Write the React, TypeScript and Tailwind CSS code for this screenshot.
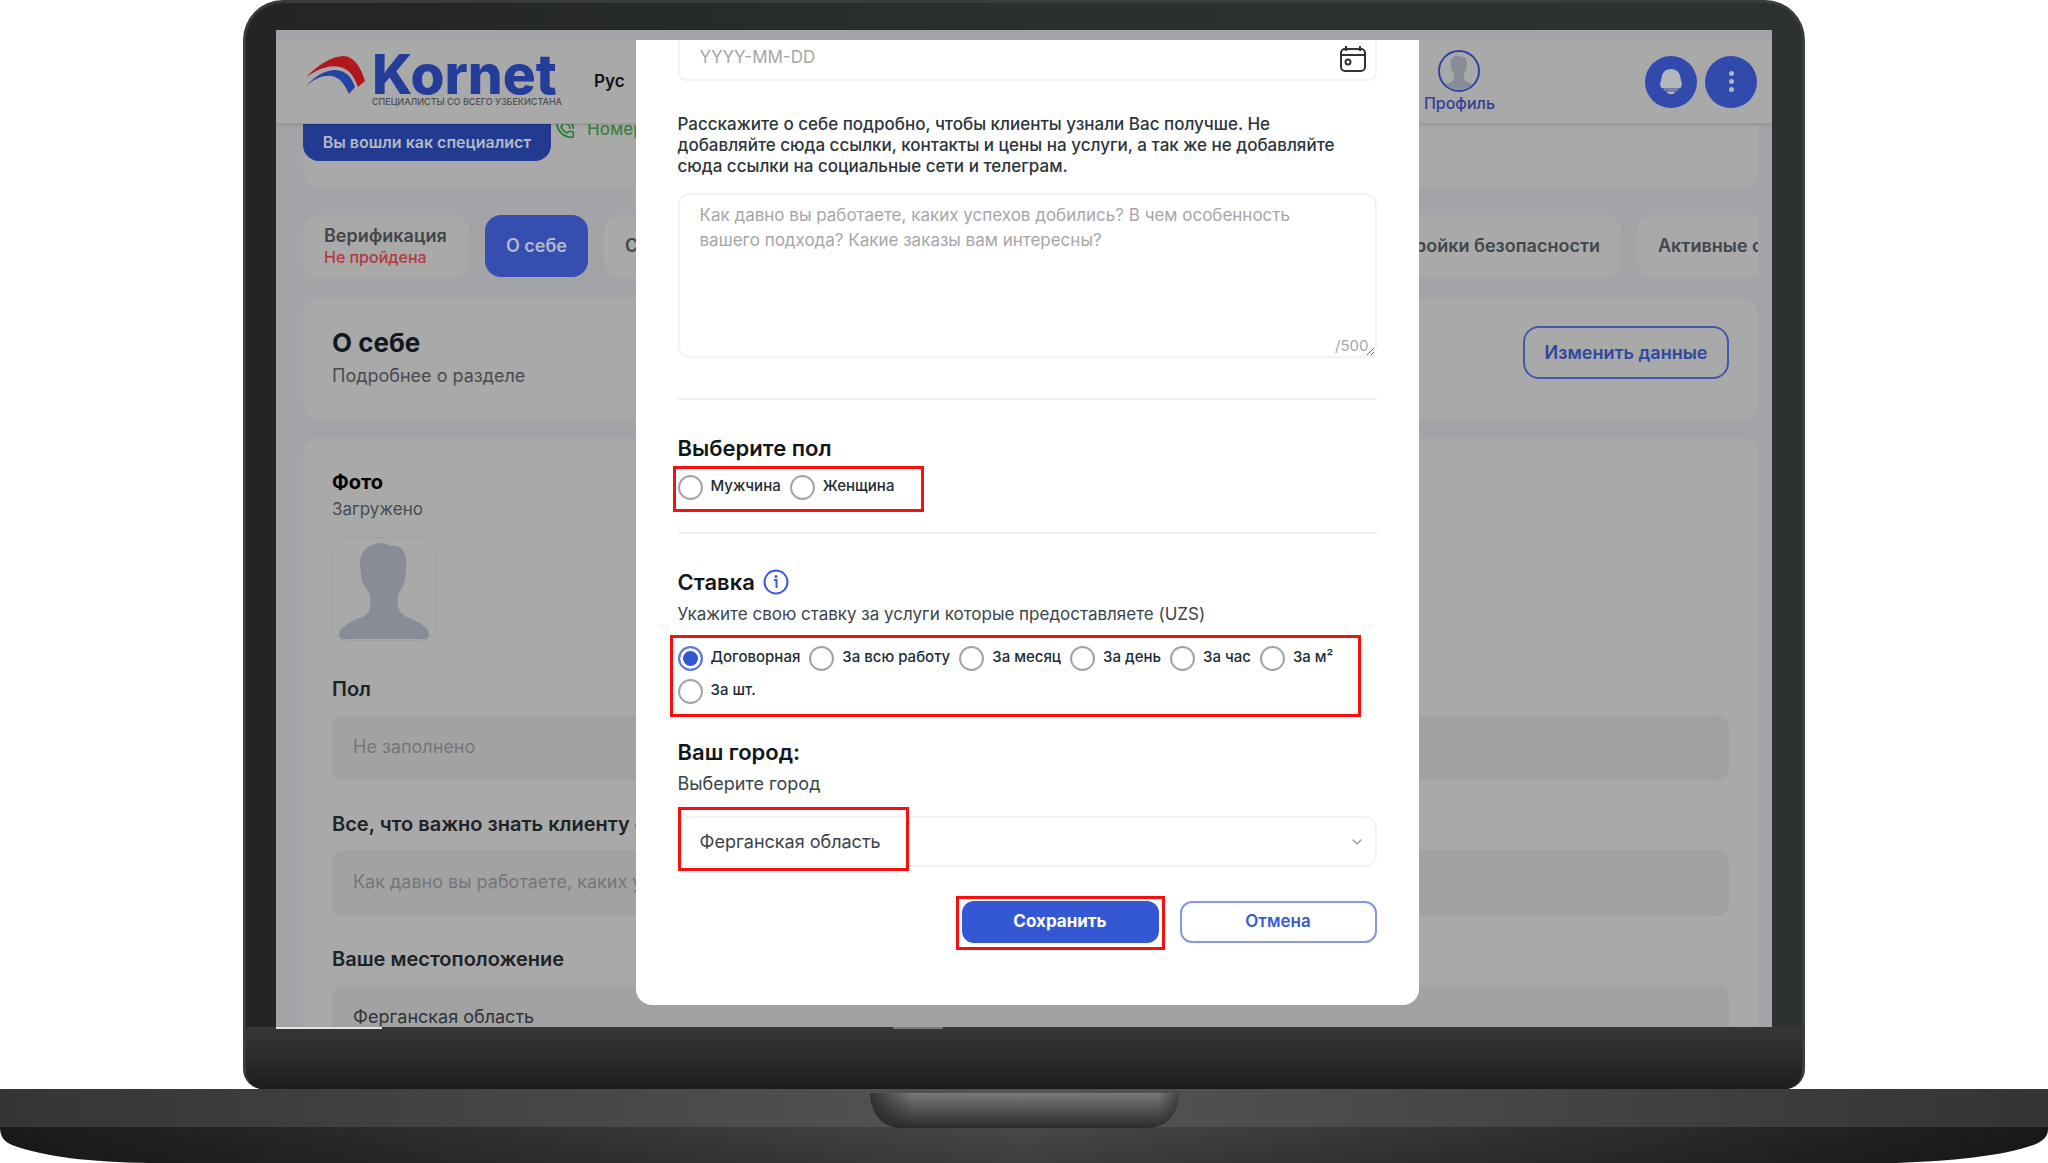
import type { ReactNode } from "react";
import { ChevronDown, PhoneCall } from "lucide-react";

const rates = ["Договорная", "За всю работу", "За месяц", "За день", "За час", "За м²", "За шт."];
const genders = ["Мужчина", "Женщина"];

const profileFields = [
  { id: "gender", label: "Пол", placeholder: "Не заполнено", value: "" },
  {
    id: "about",
    label: "Все, что важно знать клиенту о вас",
    placeholder: "Как давно вы работаете, каких успехов добились?",
    value: "",
  },
  { id: "location", label: "Ваше местоположение", placeholder: "", value: "Ферганская область" },
];

const Silhouette = ({ className }: { className?: string }) => (
  <svg viewBox="0 0 104 104" className={className} aria-hidden="true">
    <path
      fill="currentColor"
      d="M48 5C35 6 27 15 27.500 27L29 41C30 48 38 55 38 62C38.500 71 38 76 31 80C20 84 8 90 6 97C6 101 8 103 12 103H92C96 103 98 101 98 97C96 89 84 84 74 80C66 75 66 70 66 62C66 55 73 49 73.500 41L75 27C75 14 70 8 61 8C57 8 54 5 48 5Z"
    />
  </svg>
);

const Highlight = ({ className }: { className: string }) => (
  <span aria-hidden="true" className={`pointer-events-none absolute border-3 border-[#f5100f] ${className}`} />
);

const RadioOption = ({ name, label, checked }: { name: string; label: string; checked?: boolean }) => (
  <label className="flex items-start gap-2 text-[15px] leading-[21px] font-medium text-[#222b33]">
    <input
      type="radio"
      name={name}
      defaultChecked={checked}
      className="size-[25px] shrink-0 appearance-none rounded-full border-2 border-[#a3a3a3] bg-white checked:border-[#5b78dd] checked:bg-[#3157d5] checked:shadow-[inset_0_0_0_3px_white]"
    />
    {label}
  </label>
);

const Tab = ({ children, className = "" }: { children: ReactNode; className?: string }) => (
  <button
    type="button"
    className={`h-[62px] shrink-0 rounded-2xl bg-[#a9a9a9] px-[21px] text-left text-lg font-semibold whitespace-nowrap text-[#42464a] ${className}`}
  >
    {children}
  </button>
);

const Header = () => (
  <header className="relative flex h-[84px] shrink-0 items-center border-b border-[#9c9c9d] bg-[#a9a9a9] pr-[15px] pl-7 shadow-sm">
    <a href="#" className="flex items-start pb-1">
      <svg viewBox="0 0 62 42" className="mt-1 h-[42px] w-[62px]" aria-hidden="true">
        <path fill="#b1181d" d="M2 21C14 9 28 0 40 0C51 1 57 12 61 25L54 31C50 20 45 13 36 11C24 8 13 14 2 21Z" />
        <path fill="#2542a4" d="M1 31C10 21 20 14 32 14C43 15 48 22 51 31L45 38C41 29 37 22 28 20C17 19 9 24 1 31Z" />
      </svg>
      <span className="ml-[6px] flex flex-col">
        <span className="text-[55px] leading-[44px] font-extrabold text-[#233d98]">Kornet</span>
        <span className="text-[9px] leading-3 font-medium whitespace-nowrap text-[#4b4f55]">
          СПЕЦИАЛИСТЫ СО ВСЕГО УЗБЕКИСТАНА
        </span>
      </span>
    </a>
    <button type="button" className="ml-8 text-[17px] font-semibold text-[#101214]">
      Рус
    </button>
    <a href="#" className="ml-auto flex flex-col items-center text-[#333f94]">
      <span className="flex size-[42px] items-end justify-center overflow-hidden rounded-full border-2 border-[#2c449f]">
        <Silhouette className="size-[36px] text-[#888c97]" />
      </span>
      <span className="text-base leading-[22px] font-medium">Профиль</span>
    </a>
    <div className="ml-[150px] flex gap-2">
      <button type="button" aria-label="Уведомления" className="flex size-[52px] items-center justify-center rounded-full bg-[#314aab]">
        <svg viewBox="0 0 24 26" className="h-[26px] w-6" aria-hidden="true">
          <path fill="#b4b6ba" d="M12 0C18 0 21 4 21.500 9L23 15C23 18 21 19.500 19 19.500H5C3 19.500 1 18 1 15L2.500 9C3 4 6 0 12 0ZM5 20.500H19V21.500H5ZM7.500 22.500H16.500C15.500 26 8.500 26 7.500 22.500Z" />
        </svg>
      </button>
      <button type="button" aria-label="Меню" className="flex size-[52px] flex-col items-center justify-center gap-[3px] rounded-full bg-[#314aab]">
        <span className="size-[5px] rounded-full bg-[#b4b6ba]" />
        <span className="size-[5px] rounded-full bg-[#b4b6ba]" />
        <span className="size-[5px] rounded-full bg-[#b4b6ba]" />
      </button>
    </div>
  </header>
);

const ProfilePage = () => (
  <div className="flex h-full flex-col overflow-hidden bg-[#a4a4a8] pt-[10px]">
    <Header />
    <main className="flex flex-col pr-[14px] pl-[27px]">
      <section className="flex h-[63px] items-start gap-1 overflow-hidden rounded-b-2xl bg-[#a9a9a9]">
        <p className="h-[37px] w-[248px] rounded-b-2xl bg-[#223b91] text-center text-base leading-9 font-semibold whitespace-nowrap text-[#b3b8c7]">
          Вы вошли как специалист
        </p>
        <p className="-mt-[6px] flex items-center gap-3 text-[17px] leading-[22px] font-medium text-[#3f8045]">
          <PhoneCall size={20} className="text-[#217d31]" />
          Номер
        </p>
      </section>

      <nav className="mt-7 flex gap-4 overflow-hidden">
        <Tab className="w-[166px]">
          <span className="block leading-[22px]">Верификация</span>
          <span className="block text-base leading-5 font-medium text-[#b03a41]">Не пройдена</span>
        </Tab>
        <button type="button" className="h-[62px] w-[103px] shrink-0 rounded-2xl bg-[#354eaf] text-lg font-semibold text-[#b5b9c9]">
          О себе
        </button>
        <Tab className="min-w-0 flex-1">Специализации</Tab>
        <Tab>Настройки безопасности</Tab>
        <Tab className="w-[121px] overflow-hidden rounded-r-none pr-0">Активные с</Tab>
      </nav>

      <section className="mt-[22px] flex h-[120px] items-start justify-between rounded-2xl bg-[#a9a9a9] px-[29px] pt-[27px]">
        <div>
          <h1 className="text-[26px] leading-[34px] font-bold text-[#11191f]">О себе</h1>
          <a href="#" className="mt-1 block text-lg leading-6 text-[#474c50]">
            Подробнее о разделе
          </a>
        </div>
        <button type="button" className="h-[53px] w-[206px] rounded-2xl border-2 border-[#4358a8] text-lg font-semibold text-[#2e479f]">
          Изменить данные
        </button>
      </section>

      <section className="mt-[19px] rounded-t-2xl bg-[#a9a9a9] px-[29px] pt-8">
        <h2 className="text-xl leading-6 font-bold text-black">Фото</h2>
        <p className="mt-[3px] text-[17px] leading-6 text-[#474c50]">Загружено</p>
        <Silhouette className="mt-4 size-[104px] rounded-2xl border border-[#a0a0a1] text-[#878c96]" />
        <div className="mt-9 flex flex-col gap-[31px]">
          {profileFields.map((field) => (
            <div key={field.id} className="flex flex-col gap-[14px]">
              <label htmlFor={field.id} className="text-xl leading-6 font-semibold text-[#1d2327]">
                {field.label}
              </label>
              <input
                id={field.id}
                readOnly
                defaultValue={field.value}
                placeholder={field.placeholder}
                className="h-[66px] rounded-xl bg-[#a2a2a2] px-[21px] pb-1 text-lg text-[#2f3438] placeholder:text-[#757679]"
              />
            </div>
          ))}
        </div>
      </section>
    </main>
  </div>
);

const EditDialog = () => (
  <form
    role="dialog"
    aria-label="О себе"
    className="flex w-[783px] flex-col rounded-b-2xl bg-white px-[42px] pb-[62px]"
    onSubmit={(e) => e.preventDefault()}
  >
    <div className="relative">
      <input
        aria-label="Дата рождения"
        placeholder="YYYY-MM-DD"
        className="block h-[41px] w-full rounded-b-lg border-2 border-t-0 border-[#f3f3f4] px-5 pb-[6px] text-[17px] placeholder:text-[#a6a6a8]"
      />
      <svg viewBox="0 0 26 26" className="absolute top-[6px] right-[11px] size-[26px]" fill="none" stroke="#2d3338" strokeWidth="2" aria-hidden="true">
        <rect x="1" y="3" width="24" height="22" rx="4" />
        <path d="M1 9H25M6 0V5M20 0V5" />
        <circle cx="8" cy="16" r="2.500" />
      </svg>
    </div>

    <label htmlFor="bio" className="mt-[33px] pr-4 text-[17px] leading-[21px] font-medium text-[#2c353b]">
      Расскажите о себе подробно, чтобы клиенты узнали Вас получше. Не добавляйте сюда ссылки, контакты и цены на
      услуги, а так же не добавляйте сюда ссылки на социальные сети и телеграм.
    </label>
    <div className="relative mt-4">
      <textarea
        id="bio"
        placeholder="Как давно вы работаете, каких успехов добились? В чем особенность вашего подхода? Какие заказы вам интересны?"
        className="block h-[165px] w-full rounded-xl border-2 border-[#f3f3f4] px-5 py-2 text-[17px] leading-[25px] placeholder:text-[#a6a6a8]"
      />
      <span className="absolute right-2 bottom-[2px] text-[15px] leading-5 text-[#a6a6a8]">/500</span>
    </div>

    <hr className="mt-10 border-t-2 border-[#efefef]" />

    <h2 className="mt-[34px] text-[22px] leading-7 font-semibold text-[#11171c]">Выберите пол</h2>
    <div role="radiogroup" aria-label="Выберите пол" className="relative mt-[13px] flex gap-[9px] self-start">
      {genders.map((gender) => (
        <RadioOption key={gender} name="gender-choice" label={gender} />
      ))}
      <Highlight className="-top-[9px] -right-[30px] -bottom-3 -left-[5px]" />
    </div>

    <hr className="mt-8 border-t-2 border-[#efefef]" />

    <h2 className="mt-[34px] flex items-center gap-2 text-[22px] leading-7 font-semibold text-[#11171c]">
      Ставка
      <svg viewBox="0 0 26 26" className="size-[26px]" fill="none" stroke="#3a5bd9" strokeWidth="2" aria-hidden="true">
        <circle cx="13" cy="13" r="11.500" />
        <path d="M11 11H13.500V19" />
        <circle cx="13" cy="7.500" r="1.500" fill="#3a5bd9" stroke="none" />
      </svg>
    </h2>
    <p className="mt-[6px] text-[17px] leading-6 text-[#3c444a]">
      Укажите свою ставку за услуги которые предоставляете (UZS)
    </p>
    <div role="radiogroup" aria-label="Ставка" className="relative mt-5 flex flex-wrap gap-x-[9px] gap-y-2">
      {rates.map((rate, i) => (
        <RadioOption key={rate} name="rate" label={rate} checked={i === 0} />
      ))}
      <Highlight className="-top-[11px] right-4 -bottom-[13px] -left-2" />
    </div>

    <h2 className="mt-[34px] text-[22px] leading-7 font-semibold text-[#11171c]">Ваш город:</h2>
    <label htmlFor="city" className="mt-[6px] text-lg leading-6 text-[#3c444a]">
      Выберите город
    </label>
    <div className="relative mt-5">
      <select id="city" className="block h-[51px] w-full appearance-none rounded-xl border-2 border-[#f3f3f4] bg-white px-5 text-lg text-[#3c444a]">
        <option>Ферганская область</option>
      </select>
      <ChevronDown size={16} className="pointer-events-none absolute top-[18px] right-3 text-[#9a9a9a]" />
      <Highlight className="-top-[9px] -bottom-1 left-0 w-[231px]" />
    </div>

    <div className="mt-[34px] flex justify-end gap-[21px]">
      <div className="relative">
        <button type="submit" className="block h-[42px] w-[197px] rounded-xl bg-[#3458d4] text-[17px] font-bold text-white">
          Сохранить
        </button>
        <Highlight className="-inset-x-[6px] -top-[5px] -bottom-[7px]" />
      </div>
      <button type="button" className="h-[42px] w-[197px] rounded-xl border-2 border-[#8397e2] bg-white text-[17px] font-semibold text-[#3a5bd2]">
        Отмена
      </button>
    </div>
  </form>
);

const LaptopBase = () => (
  <svg viewBox="0 0 2048 74" preserveAspectRatio="none" className="block h-[74px] w-full shrink-0" aria-hidden="true">
    <defs>
      <linearGradient id="deck">
        <stop offset="0" stopColor="#353535" />
        <stop offset="0.500" stopColor="#555555" />
        <stop offset="1" stopColor="#343434" />
      </linearGradient>
      <linearGradient id="underside">
        <stop offset="0" stopColor="#1a1a1a" />
        <stop offset="0.500" stopColor="#484848" />
        <stop offset="1" stopColor="#191919" />
      </linearGradient>
      <linearGradient id="shade" x2="0" y2="1">
        <stop offset="0" stopColor="#000000" stopOpacity="0" />
        <stop offset="1" stopColor="#000000" stopOpacity="0.150" />
      </linearGradient>
      <linearGradient id="notch" x2="0" y2="1">
        <stop offset="0" stopColor="#7a7a7a" />
        <stop offset="0.450" stopColor="#555555" />
        <stop offset="1" stopColor="#2b2b2b" />
      </linearGradient>
      <linearGradient id="notchSides">
        <stop offset="0" stopColor="#222222" stopOpacity="0.800" />
        <stop offset="0.140" stopColor="#222222" stopOpacity="0" />
        <stop offset="0.930" stopColor="#222222" stopOpacity="0" />
        <stop offset="1" stopColor="#222222" stopOpacity="0.600" />
      </linearGradient>
    </defs>
    <path fill="url(#underside)" d="M0 38V40C1 49 5 53 12 56C45 68 90 73 150 74H1896C1950 72 2005 67 2036 55C2044 51 2048 47 2048 40V38Z" />
    <path fill="url(#shade)" d="M0 38V40C1 49 5 53 12 56C45 68 90 73 150 74H1896C1950 72 2005 67 2036 55C2044 51 2048 47 2048 40V38Z" />
    <path fill="url(#deck)" d="M0 0H2048V38H0Z" />
    <path fill="url(#notch)" d="M870 4H1179C1179 24 1167 39 1147 39H902C882 39 870 24 870 4Z" />
    <path fill="url(#notchSides)" d="M870 4H1179C1179 24 1167 39 1147 39H902C882 39 870 24 870 4Z" />
  </svg>
);

const App = () => {
  return (
    <div className="flex h-screen flex-col overflow-hidden bg-white font-[Inter,'Noto_Sans',sans-serif]">
      <div className="mx-[243px] flex min-h-0 flex-1 flex-col rounded-t-[40px] rounded-b-[20px] border-x-3 border-t-3 border-[#393c3d] bg-linear-to-r from-[#232424] via-[#2a2f30] to-[#2e3131] px-[30px] pt-[27px]">
        <div className="relative min-h-0 flex-1">
          <ProfilePage />
          <div className="absolute inset-0 flex items-start justify-center overflow-hidden pt-[10px] pl-[6px]">
            <EditDialog />
          </div>
        </div>
        <div className="-mx-[30px] h-[62px] shrink-0 rounded-b-[18px] bg-linear-to-b from-[#343637] via-[#292b2c] to-[#1b1b1b] px-[30px]">
          <div className="flex gap-[511px]">
            <div className="h-[2px] w-[106px] bg-[#e4e4e6]" />
            <div className="h-[2px] w-[50px] bg-[#777a77]" />
          </div>
        </div>
      </div>
      <LaptopBase />
    </div>
  );
};

export default App;
